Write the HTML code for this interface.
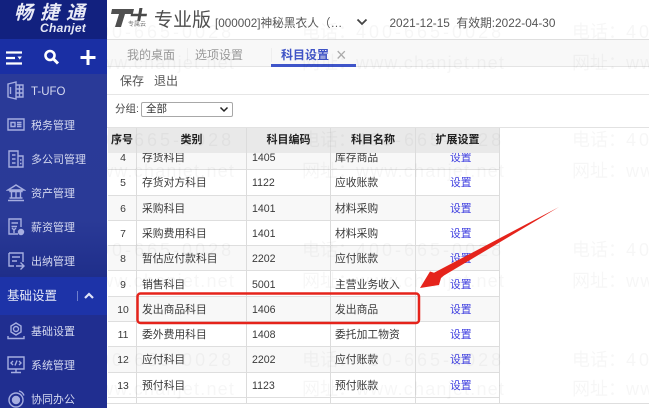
<!DOCTYPE html>
<html><head><meta charset="utf-8"><style>
*{box-sizing:border-box}
html,body{margin:0;padding:0;width:649px;height:408px;overflow:hidden;background:#fff}
body{position:relative;font-family:"Liberation Sans","Noto Sans CJK SC",sans-serif;color:#333}
.a{position:absolute;white-space:nowrap}
#wrap{position:absolute;inset:0;filter:blur(.35px)}
#side{left:0;top:0;width:107px;height:408px;background:linear-gradient(#2a3a98 74px,#2a3a97 220px,#1f2e8a 277px)}
.m{position:absolute;left:31px;font-size:11px;line-height:14px;color:#d5d9f0;white-space:nowrap}
.ic{position:absolute;left:6px;width:20px;height:20px;fill:none;stroke:#a6aee0;stroke-width:1.4}
.row{position:absolute;left:0;width:392px;height:25.3px;border-bottom:1px solid #dedede;font-size:10.8px;line-height:27px;color:#3a3a3a}
.row span{position:absolute;white-space:nowrap}
.row .n{left:0;width:30px;text-align:center;font-size:10.4px}
.row .c{left:34px}
.row .d{left:144px;font-size:10.6px}
.row .x{left:227px}
.row .l{left:342px;color:#3f3fe0}
.g{background:#f8f8f8}
.v{position:absolute;top:128px;height:275px;width:1px;background:#dcdcdc}
.h{position:absolute;top:128px;height:25px;font-size:11px;line-height:25px;font-weight:bold;color:#222;text-align:center}
.w{position:absolute;font-size:18px;line-height:20px;color:rgba(0,0,0,.035);white-space:nowrap}
.w b{font-weight:normal;letter-spacing:3px}
.w i{font-style:normal;letter-spacing:1.2px}
</style></head><body><div id="wrap">

<!-- main top -->
<div class="a" style="left:107px;top:39px;width:542px;height:28px;background:#f8f8f8;border-top:1px solid #dfdfdf;border-bottom:1px solid #e4e4e4"></div>
<div class="a" style="left:127px;top:48px;font-size:12px;line-height:14px;color:#999">我的桌面</div>
<div class="a" style="left:195px;top:48px;font-size:12px;line-height:14px;color:#999">选项设置</div>
<div class="a" style="left:187px;top:48px;width:1px;height:14px;background:#eee"></div>
<div class="a" style="left:271px;top:48px;width:1px;height:14px;background:#eee"></div>
<div class="a" style="left:281px;top:48px;font-size:12px;line-height:14px;color:#3f53c6;font-weight:bold">科目设置</div>
<div class="a" style="left:336px;top:45px;font-size:18px;line-height:20px;color:#aaa">×</div>
<div class="a" style="left:271px;top:64px;width:85px;height:2.5px;background:#3f55c9"></div>

<!-- logo T+ -->
<svg class="a" style="left:105px;top:0;width:50px;height:30px" viewBox="105 0 50 30">
<path d="M112 9H134L132.800 14H125L121 27H115L119 14H111Z" fill="#505050"/>
<path d="M131 13.800H147L146.600 16.200H130.600Z M139.400 8H142.500L140.200 21H137.200Z" fill="#4a4a4a"/>
</svg>
<div class="a" style="left:128px;top:22px;font-size:6px;line-height:6px;color:#777">专属云</div>
<div class="a" style="left:154px;top:10px;font-size:19px;line-height:22px;color:#4f4f4f">专业版</div>
<div class="a" style="left:215px;top:17px;font-size:11.700px;line-height:14px;color:#555">[000002]神秘黑衣人（…</div>
<svg class="a" style="left:356px;top:17px;width:12px;height:10px" viewBox="0 0 12 10"><path d="M1.500 2.500L6 7L10.500 2.500" fill="none" stroke="#444" stroke-width="1.800"/></svg>
<div class="a" style="left:389.500px;top:15px;font-size:11.800px;line-height:14px;color:#555;transform:translateY(1px)">2021-12-15&nbsp; 有效期:2022-04-30</div>

<div class="a" style="left:120px;top:74px;font-size:12px;line-height:14px;color:#555">保存</div>
<div class="a" style="left:154px;top:74px;font-size:12px;line-height:14px;color:#555">退出</div>
<div class="a" style="left:107px;top:94px;width:542px;height:1px;background:#e6e6e6"></div>

<div class="a" style="left:115px;top:102px;font-size:10.500px;line-height:14px;color:#444">分组:</div>
<div class="a" style="left:141px;top:102px;width:92px;height:15px;border:1px solid #a8a8a8;border-radius:2px;background:#fff;font-size:10.500px;line-height:13px;padding-left:4px;color:#333">全部</div>
<svg class="a" style="left:219px;top:106px;width:10px;height:8px" viewBox="0 0 10 8"><path d="M1.500 1.500L5 5L8.500 1.500" fill="none" stroke="#222" stroke-width="1.500"/></svg>

<!-- table -->
<div class="a" style="left:107px;top:127px;width:542px;height:1px;background:#e2e2e2"></div>
<div class="a" style="left:108px;top:128px;width:392px;height:25px;background:#e9e9e9"></div>
<div class="a" style="left:108px;top:153px;width:392px;height:250px;overflow:hidden">
 <div class="row g" style="top:-8px"><span class="n">4</span><span class="c">存货科目</span><span class="d">1405</span><span class="x">库存商品</span><span class="l">设置</span></div>
 <div class="row" style="top:17.300px"><span class="n">5</span><span class="c">存货对方科目</span><span class="d">1122</span><span class="x">应收账款</span><span class="l">设置</span></div>
 <div class="row g" style="top:42.600px"><span class="n">6</span><span class="c">采购科目</span><span class="d">1401</span><span class="x">材料采购</span><span class="l">设置</span></div>
 <div class="row" style="top:67.900px"><span class="n">7</span><span class="c">采购费用科目</span><span class="d">1401</span><span class="x">材料采购</span><span class="l">设置</span></div>
 <div class="row g" style="top:93.200px"><span class="n">8</span><span class="c">暂估应付款科目</span><span class="d">2202</span><span class="x">应付账款</span><span class="l">设置</span></div>
 <div class="row" style="top:118.500px"><span class="n">9</span><span class="c">销售科目</span><span class="d">5001</span><span class="x">主营业务收入</span><span class="l">设置</span></div>
 <div class="row g" style="top:143.800px"><span class="n">10</span><span class="c">发出商品科目</span><span class="d">1406</span><span class="x">发出商品</span><span class="l">设置</span></div>
 <div class="row" style="top:169.100px"><span class="n">11</span><span class="c">委外费用科目</span><span class="d">1408</span><span class="x">委托加工物资</span><span class="l">设置</span></div>
 <div class="row g" style="top:194.400px"><span class="n">12</span><span class="c">应付科目</span><span class="d">2202</span><span class="x">应付账款</span><span class="l">设置</span></div>
 <div class="row" style="top:219.700px"><span class="n">13</span><span class="c">预付科目</span><span class="d">1123</span><span class="x">预付账款</span><span class="l">设置</span></div>
</div>
<div class="v" style="left:136px"></div><div class="v" style="left:246px"></div><div class="v" style="left:330px"></div><div class="v" style="left:415px"></div><div class="v" style="left:499px"></div>
<div class="h" style="left:108px;width:28px">序号</div>
<div class="h" style="left:137px;width:109px">类别</div>
<div class="h" style="left:247px;width:83px">科目编码</div>
<div class="h" style="left:331px;width:84px">科目名称</div>
<div class="h" style="left:416px;width:83px">扩展设置</div>
<div class="a" style="left:107px;top:403px;width:542px;height:1px;background:#dedede"></div>

<!-- watermark -->
<div class="a" style="left:107px;top:0;width:542px;height:408px;overflow:hidden">
 <div class="w" style="left:-75px;top:22px">电话：<b>400-665-0028</b></div><div class="w" style="left:195px;top:22px">电话：<b>400-665-0028</b></div><div class="w" style="left:465px;top:22px">电话：<b>400-665-0028</b></div>
 <div class="w" style="left:-75px;top:53px">网址：<i>www.chanjet.net</i></div><div class="w" style="left:195px;top:53px">网址：<i>www.chanjet.net</i></div><div class="w" style="left:465px;top:53px">网址：<i>www.chanjet.net</i></div>
 <div class="w" style="left:-75px;top:130px">电话：<b>400-665-0028</b></div><div class="w" style="left:195px;top:130px">电话：<b>400-665-0028</b></div><div class="w" style="left:465px;top:130px">电话：<b>400-665-0028</b></div>
 <div class="w" style="left:-75px;top:161px">网址：<i>www.chanjet.net</i></div><div class="w" style="left:195px;top:161px">网址：<i>www.chanjet.net</i></div><div class="w" style="left:465px;top:161px">网址：<i>www.chanjet.net</i></div>
 <div class="w" style="left:-75px;top:240px">电话：<b>400-665-0028</b></div><div class="w" style="left:195px;top:240px">电话：<b>400-665-0028</b></div><div class="w" style="left:465px;top:240px">电话：<b>400-665-0028</b></div>
 <div class="w" style="left:-75px;top:271px">网址：<i>www.chanjet.net</i></div><div class="w" style="left:195px;top:271px">网址：<i>www.chanjet.net</i></div><div class="w" style="left:465px;top:271px">网址：<i>www.chanjet.net</i></div>
 <div class="w" style="left:-75px;top:350px">电话：<b>400-665-0028</b></div><div class="w" style="left:195px;top:350px">电话：<b>400-665-0028</b></div><div class="w" style="left:465px;top:350px">电话：<b>400-665-0028</b></div>
 <div class="w" style="left:-75px;top:379px">网址：<i>www.chanjet.net</i></div><div class="w" style="left:195px;top:379px">网址：<i>www.chanjet.net</i></div><div class="w" style="left:465px;top:379px">网址：<i>www.chanjet.net</i></div>
</div>

<!-- annotation -->
<svg class="a" style="left:0;top:0;width:649px;height:408px" viewBox="0 0 649 408">
<rect x="137.500" y="293.500" width="281.500" height="29.500" rx="3" fill="none" stroke="#e5231b" stroke-width="2.500"/>
<path d="M559 207L444 275.500L441 278L439 285L420 288L430 271.500L434 272.800Z" fill="#e5231b"/>
</svg>

<!-- sidebar -->
<div class="a" id="side">
 <div class="a" style="left:0;top:0;width:107px;height:39px;background:#12217f"></div>
 <div class="a" style="left:14px;top:3px;font-size:19px;line-height:22px;font-style:italic;font-weight:bold;color:#e8eaf6;letter-spacing:7px">畅捷通</div>
 <div class="a" style="left:40px;top:21px;font-size:12px;line-height:14px;font-style:italic;font-weight:bold;color:#e4e7f5;letter-spacing:.3px">Chanjet</div>
 <div class="a" style="left:0;top:39px;width:107px;height:35px;background:#1a2fa4"></div>
 <svg class="a" style="left:0;top:39px;width:107px;height:35px" viewBox="0 0 107 35">
  <path d="M6 13.500H22M6 19H15M6 24.500H22" stroke="#fff" stroke-width="2.200" fill="none"/><path d="M17.500 17.500H22L19.700 20.500Z" fill="#fff"/>
  <circle cx="50" cy="16.500" r="4.500" stroke="#fff" stroke-width="2.600" fill="none"/><path d="M53.500 20L58 24.500" stroke="#fff" stroke-width="3" fill="none"/>
  <path d="M88 11V26M80.500 18.500H95.500" stroke="#fff" stroke-width="3" fill="none"/>
 </svg>

 <svg class="ic" style="top:81px" viewBox="0 0 20 20"><path d="M2 3L10 1V18L2 16ZM10 4H17V16H10M13.500 4V16M10 8H17M10 12H17M4.500 6V13"/></svg>
 <div class="m" style="top:85px;font-size:11.500px">T-UFO</div>
 <svg class="ic" style="top:115px" viewBox="0 0 20 20"><path d="M2 4H18V15H2ZM5 7.500H9V11.500H5ZM11 7.500H15.500M11 9.500H15.500M11 11.500H15.500"/></svg>
 <div class="m" style="top:119px">税务管理</div>
 <svg class="ic" style="top:149px" viewBox="0 0 20 20"><path d="M3 2H12V18H3ZM12 7H17V18H12ZM6 6H9.500M6 10H9.500M6 14H9.500M14 11H15.500M14 14.500H15.500"/></svg>
 <div class="m" style="top:153px">多公司管理</div>
 <svg class="ic" style="top:183px" viewBox="0 0 20 20"><path d="M2 7L10 2L18 7ZM4 7.500V8.500H16V7.500M5.500 9V14.500M10 9V14.500M14.500 9V14.500M3.500 15H16.500M2 17.500H18"/></svg>
 <div class="m" style="top:187px">资产管理</div>
 <svg class="ic" style="top:217px" viewBox="0 0 20 20"><path d="M12 17H3V2H15V10M5.500 6H12M5.500 9.500H11M6 11L8 13L10 11M8 13V16"/><circle cx="15" cy="15" r="2.500" fill="#a6aee0"/></svg>
 <div class="m" style="top:221px">薪资管理</div>
 <svg class="ic" style="top:251px" viewBox="0 0 20 20"><path d="M3 2H17V11M8 15H3V2M6 6H14M6 10H11M10 15H18M14.500 11.500L18 15L14.500 18.500"/></svg>
 <div class="m" style="top:255px">出纳管理</div>

 <div class="a" style="left:0;top:277px;width:107px;height:38px;background:#1d33a8"></div>
 <div class="a" style="left:0;top:315px;width:107px;height:93px;background:#202e90"></div>
 <div class="a" style="left:7px;top:289px;font-size:12.500px;line-height:15px;color:#e6e9f8">基础设置</div>
 <div class="a" style="left:77px;top:291px;width:1px;height:10px;background:#6f7fcc"></div>
 <svg class="a" style="left:83px;top:291px;width:12px;height:10px" viewBox="0 0 12 10"><path d="M2 7L6 3L10 7" fill="none" stroke="#dfe3f7" stroke-width="2.200"/></svg>

 <svg class="ic" style="top:321px" viewBox="0 0 20 20"><path d="M10 2L15 5V11L10 14L5 11V5Z"/><circle cx="10" cy="8" r="2.500"/><path d="M2 15V17.500H18V15"/></svg>
 <div class="m" style="top:325px">基础设置</div>
 <svg class="ic" style="top:355px" viewBox="0 0 20 20"><path d="M2 2H18V14H2ZM10 14V17M5 17.500H15M7 6L5 8L7 10M13 6L15 8L13 10M11 5.500L9 10.500"/></svg>
 <div class="m" style="top:359px">系统管理</div>
 <svg class="ic" style="top:389px" viewBox="0 0 20 20"><circle cx="10" cy="11" r="7"/><circle cx="10" cy="11" r="3.500" fill="#a6aee0"/><path d="M13 2C15.500 2.500 17 4 18 6.500"/></svg>
 <div class="m" style="top:393px">协同办公</div>
</div>
</div></body></html>
